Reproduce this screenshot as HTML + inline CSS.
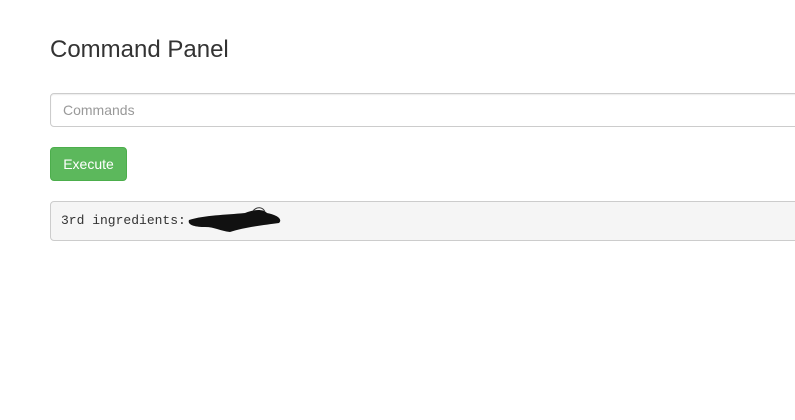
<!DOCTYPE html>
<html><head><style>
body{margin:0;background:#fff;font-family:"Liberation Sans",sans-serif;color:#333;width:795px;height:420px;overflow:hidden;position:relative}
h3{position:absolute;left:50px;top:36px;margin:0;font-size:24px;font-weight:500;line-height:28px}
.in{position:absolute;left:50px;top:93px;width:760px;height:32px;border:1px solid #ccc;border-radius:4px;box-shadow:inset 0 1px 1px rgba(0,0,0,.075)}
.in span{position:absolute;left:12px;top:8px;font-size:14px;color:#999}
.btn{position:absolute;left:50px;top:147px;width:75px;height:32px;background:#5cb85c;border:1px solid #4cae4c;border-radius:4px;color:#fff;font-size:14px;line-height:32px;text-align:center}
pre{position:absolute;left:50px;top:201px;width:760px;height:38px;margin:0;background:#f5f5f5;border:1px solid #ccc;border-radius:4px;font-family:"Liberation Mono",monospace;font-size:13px;line-height:38px;padding:0 0 0 10px;box-sizing:content-box;color:#333}
</style></head><body>
<h3>Command Panel</h3>
<div class="in"><span>Commands</span></div>
<div class="btn">Execute</div>
<pre>3rd ingredients:</pre>
<svg style="position:absolute;left:185px;top:205px" width="100" height="32"><path d="M4 15 C20 10 40 10 60 8 C70 4 78 4 82 8 C92 10 98 14 94 18 C80 20 60 22 45 27 C35 26 30 22 20 22 C10 22 2 20 4 15Z" fill="#111"/><path d="M68 6 C72 1 78 2 80 7" stroke="#333" fill="none"/></svg>
</body></html>
